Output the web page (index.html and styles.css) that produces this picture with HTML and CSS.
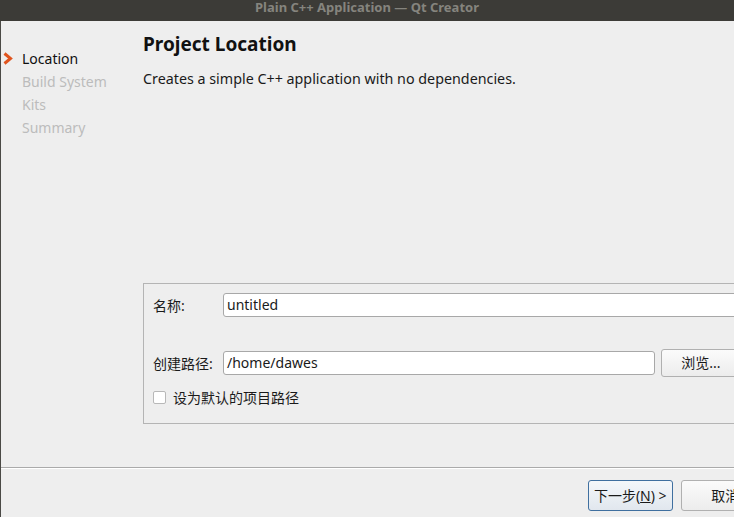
FILE: index.html
```html
<!DOCTYPE html>
<html>
<head>
<meta charset="utf-8">
<link rel="stylesheet" href="styles.css">
</head>
<body>
<div class="window">
  <div class="titlebar">Plain C++ Application — Qt Creator</div>
  <div class="frame">
    <div class="main">
      <div class="sidebar">
        <div class="step current">
          <svg class="arrow" width="12" height="13" viewBox="0 0 12 13"><path d="M2.5 1.5 L8.5 6.5 L2.5 11.5" fill="none" stroke="#e0541e" stroke-width="3" stroke-linejoin="miter"/></svg>
          <span>Location</span>
        </div>
        <div class="step">Build System</div>
        <div class="step">Kits</div>
        <div class="step">Summary</div>
      </div>
      <div class="content">
        <h1 class="title">Project Location</h1>
        <p class="subtitle">Creates a simple C++ application with no dependencies.</p>
        <div class="group">
          <div class="row">
            <span class="label">名称:</span>
            <div class="input wide">untitled</div>
          </div>
          <div class="row row2">
            <span class="label">创建路径:</span>
            <div class="input path">/home/dawes</div>
            <div class="button browse">浏览...</div>
          </div>
          <div class="check-row">
            <span class="checkbox"></span>
            <span class="check-label">设为默认的项目路径</span>
          </div>
        </div>
      </div>
    </div>
    <div class="footer">
      <div class="button default">下一步(<u>N</u>) &gt;</div>
      <div class="button cancel">取消</div>
    </div>
  </div>
</div>
</body>
</html>
```
FILE: styles.css
```css
html, body {
  margin: 0;
  padding: 0;
}
body {
  width: 734px;
  height: 517px;
  overflow: hidden;
  background: #eeeeee;
  font-family: "Noto Sans", "Noto Sans CJK SC", sans-serif;
  font-size: 14px;
  color: #1a1a1a;
}
.window {
  width: 770px;
  height: 517px;
  display: flex;
  flex-direction: column;
}
.titlebar {
  height: 21px;
  flex: none;
  background: #3c3b37;
  color: #85847e;
  font-weight: bold;
  font-size: 13px;
  line-height: 15px;
  width: 734px;
  text-align: center;
  box-sizing: border-box;
}
.frame {
  flex: 1;
  display: flex;
  flex-direction: column;
  border-left: 1px solid #4a4945;
}
.main {
  flex: 1;
  display: flex;
}
.sidebar {
  width: 142px;
  flex: none;
  padding-top: 26px;
  box-sizing: border-box;
}
.step {
  height: 23px;
  line-height: 23px;
  padding-left: 21px;
  color: #bcbcbc;
  position: relative;
}
.step.current {
  color: #101010;
}
.arrow {
  position: absolute;
  left: 1px;
  top: 5px;
}
.content {
  flex: 1;
  display: flex;
  flex-direction: column;
  padding-top: 11px;
}
.title {
  margin: 0;
  font-size: 19px;
  line-height: 24px;
  font-weight: bold;
  color: #111;
}
.subtitle {
  margin: 13px 0 0;
  line-height: 20px;
  font-size: 14.3px;
}
.group {
  margin-top: auto;
  margin-bottom: 43px;
  border: 1px solid #b4b4b4;
  border-right: none;
  height: 141px;
  box-sizing: border-box;
  padding: 9px 0 0 9px;
  display: flex;
  flex-direction: column;
}
.row {
  display: flex;
  align-items: center;
  height: 24px;
}
.row2 {
  margin-top: 32px;
  height: 28px;
}
.label {
  width: 70px;
  flex: none;
}
.input {
  height: 24px;
  box-sizing: border-box;
  border: 1px solid #a8a8a8;
  border-radius: 3px;
  background: #fff;
  padding-left: 3px;
  line-height: 22px;
}
.wide {
  flex: 1;
}
.path {
  width: 432px;
  flex: none;
}
.button {
  height: 28px;
  box-sizing: border-box;
  border: 1px solid #b0b0b0;
  border-radius: 3px;
  background: linear-gradient(#fbfbfb, #ececec);
  text-align: center;
  line-height: 26px;
}
.browse {
  margin-left: 6px;
  width: 80px;
}
.check-row {
  display: flex;
  align-items: center;
  margin-top: 10px;
}
.checkbox {
  width: 13px;
  height: 13px;
  box-sizing: border-box;
  border: 1px solid #b8b8b8;
  border-radius: 2px;
  background: #fff;
  margin-right: 7px;
}
.footer {
  height: 50px;
  flex: none;
  border-top: 1px solid #aaaaaa;
  box-shadow: inset 0 1px 0 #ffffff;
  display: flex;
  padding: 12px 0 0 587px;
  box-sizing: border-box;
  gap: 8px;
}
.footer .button {
  height: 31px;
  line-height: 29px;
}
.default {
  width: 85px;
  border-color: #3f6f9f;
  background: linear-gradient(#f4f7fa, #e1e7ee);
}
.default u {
  text-decoration-thickness: 1px;
}
.cancel {
  width: 90px;
}
```
